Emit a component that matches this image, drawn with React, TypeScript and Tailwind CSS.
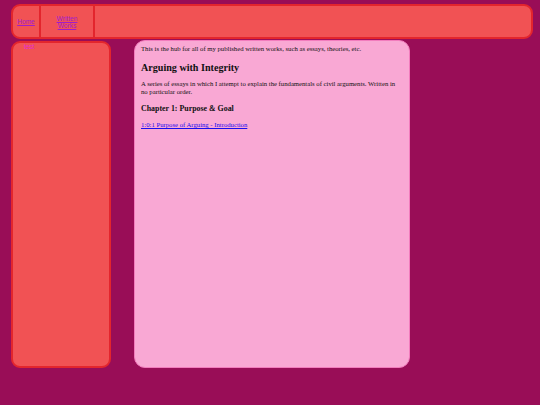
import React from "react";

export default function App() {
  return (
    <div className="w-[540px] h-[405px] bg-[#990d57] pt-[4px] pl-[11px] font-['Liberation_Serif',serif] overflow-hidden">
      <div className="w-[522px] h-[35px] border-2 border-[#e3252d] rounded-[9px] bg-[#f15254] flex font-['Liberation_Sans',sans-serif] text-[6.6px] leading-[7px]">
        <div className="w-[28px] h-full border-r-2 border-[#e3252d] flex items-center justify-center">
          <a href="#" className="text-[#a01ccb] underline">Home</a>
        </div>
        <div className="w-[54px] h-full border-r-2 border-[#e3252d] flex items-center justify-center text-center">
          <a href="#" className="text-[#a01ccb] underline">Written<br />Works</a>
        </div>
      </div>
      <div className="flex items-start">
        <div className="mt-[2px] w-[100px] h-[327px] border-2 border-[#e3252d] rounded-[9px] bg-[#f15254] font-['Liberation_Sans',sans-serif] text-[6.4px] leading-[7px] text-[#e52bd2] pl-[11px] pt-[0px]">
          test
        </div>
        <div className="mt-[1px] ml-[23px] w-[276px] h-[328px] border border-[#f27cbd] rounded-[11px] bg-[#f9a8d4] px-[6px] pt-[4px] text-[#111111]">
          <p className="text-[6.7px] leading-[8px]">This is the hub for all of my published written works, such as essays, theories, etc.</p>
          <h2 className="mt-[9px] text-[10.1px] leading-[12px] font-bold">Arguing with Integrity</h2>
          <p className="mt-[6px] text-[6.7px] leading-[8px]">A series of essays in which I attempt to explain the fundamentals of civil arguments. Written in no particular order.</p>
          <h3 className="mt-[8px] text-[7.9px] leading-[10px] font-bold">Chapter 1: Purpose &amp; Goal</h3>
          <p className="mt-[7px] text-[6.7px] leading-[8px]">
            <a href="#" className="text-[#1a0dee] underline">1:0:1 Purpose of Arguing - Introduction</a>
          </p>
        </div>
      </div>
    </div>
  );
}
